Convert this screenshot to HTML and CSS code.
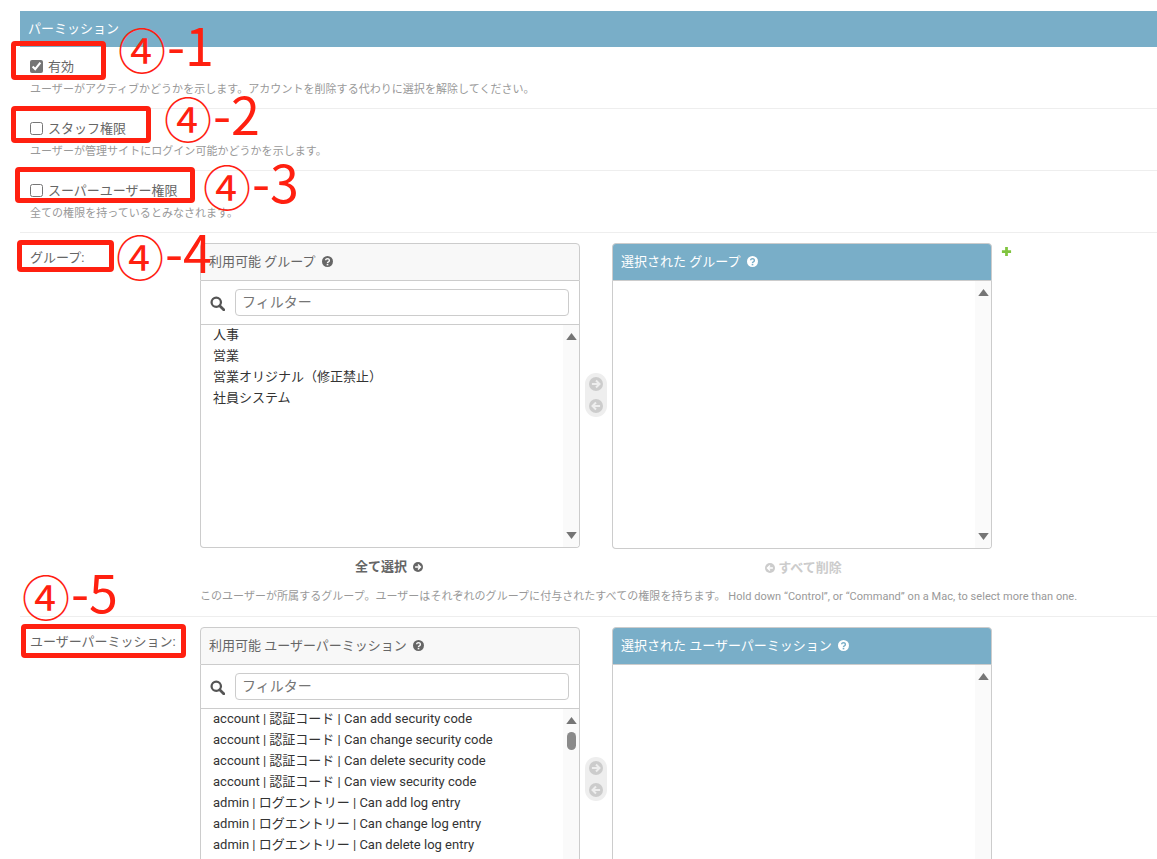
FILE: index.html
```html
<!DOCTYPE html>
<html lang="ja">
<head>
  <meta charset="UTF-8" />
  <title>パーミッション</title>
  <link rel="stylesheet" href="styles.css">
</head>
<body>
  <svg class="icon-defs" width="0" height="0">
    <symbol id="i-help" viewBox="0 0 24 24">
      <circle cx="12" cy="12" r="12" fill="currentColor"/>
      <path d="M8 9.500a4 3.600 0 1 1 6 3.200c-1.400.8-2 1.300-2 2.800" fill="none" stroke="var(--hole)" stroke-width="3.200"/>
      <rect x="10.200" y="17" width="3.600" height="3.400" fill="var(--hole)"/>
    </symbol>
    <symbol id="i-search" viewBox="0 0 24 24">
      <circle cx="10" cy="10" r="7.500" fill="none" stroke="currentColor" stroke-width="3.600"/>
      <path d="M15.500 15.500l6.500 6.500" stroke="currentColor" stroke-width="4.400" stroke-linecap="round"/>
    </symbol>
    <symbol id="i-right" viewBox="0 0 24 24">
      <circle cx="12" cy="12" r="12" fill="currentColor"/>
      <path d="M5 12h12M12 6l6 6-6 6" fill="none" stroke="var(--hole)" stroke-width="3.400"/>
    </symbol>
    <symbol id="i-left" viewBox="0 0 24 24">
      <circle cx="12" cy="12" r="12" fill="currentColor"/>
      <path d="M19 12H7M12 6l-6 6 6 6" fill="none" stroke="var(--hole)" stroke-width="3.400"/>
    </symbol>
    <symbol id="i-up" viewBox="0 0 12 8"><path d="M6 0l6 8H0z" fill="currentColor"/></symbol>
    <symbol id="i-down" viewBox="0 0 12 8"><path d="M0 0h12L6 8z" fill="currentColor"/></symbol>
  </svg>

  <div class="page">
    <h2 class="module-title">パーミッション</h2>

    <div class="form-row">
      <label class="check-label"><input type="checkbox" checked> 有効</label>
      <div class="help">ユーザーがアクティブかどうかを示します。アカウントを削除する代わりに選択を解除してください。</div>
    </div>
    <div class="form-row">
      <label class="check-label"><input type="checkbox"> スタッフ権限</label>
      <div class="help">ユーザーが管理サイトにログイン可能かどうかを示します。</div>
    </div>
    <div class="form-row">
      <label class="check-label"><input type="checkbox"> スーパーユーザー権限</label>
      <div class="help">全ての権限を持っているとみなされます。</div>
    </div>

    <div class="form-row selector-row">
      <div class="field">
        <div class="field-label">グループ:</div>
        <div class="selector">
          <div class="sel-box">
            <div class="sel-title">利用可能 グループ <svg class="q"><use href="#i-help"/></svg></div>
            <div class="sel-filter">
              <svg class="search"><use href="#i-search"/></svg>
              <input type="text" placeholder="フィルター">
            </div>
            <div class="sel-list group-avail">
              <div class="options">
                <div>人事</div>
                <div>営業</div>
                <div>営業オリジナル（修正禁止）</div>
                <div>社員システム</div>
              </div>
              <div class="scroll"><svg class="arrow"><use href="#i-up"/></svg><svg class="arrow"><use href="#i-down"/></svg></div>
            </div>
            <div class="sel-all"><b>全て選択</b> <svg class="small-arrow"><use href="#i-right"/></svg></div>
          </div>
          <div class="movers">
            <svg><use href="#i-right"/></svg>
            <svg><use href="#i-left"/></svg>
          </div>
          <div class="sel-box chosen">
            <div class="sel-title">選択された グループ <svg class="q"><use href="#i-help"/></svg></div>
            <div class="sel-list group-chosen">
              <div class="options"></div>
              <div class="scroll"><svg class="arrow"><use href="#i-up"/></svg><svg class="arrow"><use href="#i-down"/></svg></div>
            </div>
            <div class="sel-all off"><svg class="small-arrow"><use href="#i-left"/></svg> <b>すべて削除</b></div>
          </div>
          <svg class="add-link" viewBox="0 0 12 12"><path d="M4.500 1h3v3.500H11v3H7.500V11h-3V7.500H1v-3h3.500z"/></svg>
        </div>
      </div>
      <div class="help selector-help">このユーザーが所属するグループ。ユーザーはそれぞれのグループに付与されたすべての権限を持ちます。 Hold down “Control”, or “Command” on a Mac, to select more than one.</div>
    </div>

    <div class="form-row selector-row">
      <div class="field">
        <div class="field-label">ユーザーパーミッション:</div>
        <div class="selector">
          <div class="sel-box">
            <div class="sel-title">利用可能 ユーザーパーミッション <svg class="q"><use href="#i-help"/></svg></div>
            <div class="sel-filter">
              <svg class="search"><use href="#i-search"/></svg>
              <input type="text" placeholder="フィルター">
            </div>
            <div class="sel-list perm-list">
              <div class="options">
                <div>account | 認証コード | Can add security code</div>
                <div>account | 認証コード | Can change security code</div>
                <div>account | 認証コード | Can delete security code</div>
                <div>account | 認証コード | Can view security code</div>
                <div>admin | ログエントリー | Can add log entry</div>
                <div>admin | ログエントリー | Can change log entry</div>
                <div>admin | ログエントリー | Can delete log entry</div>
              </div>
              <div class="scroll"><svg class="arrow"><use href="#i-up"/></svg><span class="thumb"></span></div>
            </div>
          </div>
          <div class="movers">
            <svg><use href="#i-right"/></svg>
            <svg><use href="#i-left"/></svg>
          </div>
          <div class="sel-box chosen">
            <div class="sel-title">選択された ユーザーパーミッション <svg class="q"><use href="#i-help"/></svg></div>
            <div class="sel-list chosen-perm">
              <div class="options"></div>
              <div class="scroll"><svg class="arrow"><use href="#i-up"/></svg></div>
            </div>
          </div>
        </div>
      </div>
    </div>
  </div>

  <!-- 赤い注釈 -->
  <div class="mark box-1"></div>
  <div class="mark box-2"></div>
  <div class="mark box-3"></div>
  <div class="mark box-4"></div>
  <div class="mark box-5"></div>
  <div class="note note-1">④<span class="num">-1</span></div>
  <div class="note note-2">④<span class="num">-2</span></div>
  <div class="note note-3">④<span class="num">-3</span></div>
  <div class="note note-4">④<span class="num">-4</span></div>
  <div class="note note-5">④<span class="num">-5</span></div>
</body>
</html>
```

FILE: styles.css
```css
html, body {
  margin: 0;
  height: 859px;
  overflow: hidden;
}

body {
  position: relative;
  background: #fff;
  color: #333;
  font-family: Roboto, "Noto Sans CJK JP", sans-serif;
  font-size: 13px;
}

.icon-defs {
  position: absolute;
}

.page {
  height: 859px;
  overflow: hidden;
  padding: 11px 0 0 20px;
  box-sizing: border-box;
}

.module-title {
  margin: 0;
  height: 36px;
  padding-left: 8px;
  background: #79aec8;
  color: #fff;
  font-size: 13px;
  font-weight: 400;
  line-height: 36px;
}

.form-row {
  padding: 9px 0 0 10px;
  height: 52px;
  border-bottom: 1px solid #eee;
}

.check-label {
  display: flex;
  align-items: flex-start;
  gap: 5px;
  height: 20px;
  color: #666;
  line-height: 22px;
}

.check-label input {
  width: 13px;
  height: 13px;
  margin: 4px 0 0;
  accent-color: #757575;
}

.help {
  margin-top: 5px;
  color: #999;
  font-size: 11px;
  letter-spacing: 0.04px;
  line-height: 18px;
}

.selector-row {
  height: auto;
  padding-top: 10px;
  padding-bottom: 10px;
}

.field {
  display: flex;
}

.field-label {
  width: 170px;
  flex: none;
  padding-top: 6px;
  color: #666;
  line-height: 18px;
  white-space: nowrap;
}

.selector {
  display: flex;
  align-items: flex-start;
}

.sel-box {
  width: 380px;
  flex: none;
}

.sel-title {
  height: 36px;
  padding-left: 8px;
  background: #f8f8f8;
  border: 1px solid #ccc;
  border-radius: 4px 4px 0 0;
  color: #666;
  font-size: 13px;
  line-height: 35px;
  white-space: nowrap;
}

.q {
  --hole: #f8f8f8;
  width: 11px;
  height: 11px;
  margin-left: 3px;
  vertical-align: -1px;
  color: #666;
}

.sel-filter {
  display: flex;
  align-items: center;
  height: 43px;
  padding: 0 10px 0 9px;
  border: 1px solid #ccc;
  border-top: 0;
  color: #555;
}

.search {
  width: 15px;
  height: 15px;
  margin: 2px 10px 0 0;
}

.sel-filter input {
  flex: 1;
  min-width: 0;
  height: 27px;
  box-sizing: border-box;
  padding: 0 6px 2px;
  border: 1px solid #ccc;
  border-radius: 4px;
  font: inherit;
  font-size: 14px;
}

.sel-filter input::placeholder {
  color: #757575;
}

.sel-list {
  display: flex;
  border: 1px solid #ccc;
  border-top: 0;
  background: #fff;
  overflow: hidden;
}

.perm-list {
  height: 200px;
}

.chosen-perm {
  height: 240px;
}

.group-avail {
  height: 222px;
  border-radius: 0 0 4px 4px;
}

.group-chosen {
  height: 267px;
  border-radius: 0 0 4px 4px;
}

.options {
  flex: 1;
  margin-top: -1px;
  padding: 0 12px;
  color: #333;
  line-height: 21px;
  white-space: nowrap;
}

.scroll {
  display: flex;
  flex-direction: column;
  justify-content: space-between;
  align-items: center;
  align-self: stretch;
  width: 16px;
  background: #fafafa;
  color: #757575;
}

.arrow {
  width: 11px;
  height: 7px;
  margin: 8px 0;
}

.sel-list .thumb {
  width: 9px;
  height: 18px;
  border-radius: 5px;
  background: #8a8a8a;
  margin-top: 0;
  margin-bottom: auto;
}

.sel-all {
  margin-top: 11px;
  padding-left: 155px;
  color: #666;
  font-size: 13px;
  line-height: 16px;
}

.sel-all.off {
  padding-left: 151px;
  color: #ccc;
}

.small-arrow {
  --hole: #fff;
  width: 10px;
  height: 10px;
  margin-left: 3px;
  vertical-align: -1px;
}

.sel-all.off .small-arrow {
  margin-left: 2px;
}

.movers {
  display: flex;
  flex-direction: column;
  align-items: center;
  gap: 8px;
  box-sizing: border-box;
  width: 22px;
  height: 44px;
  margin: 130px 5px 0;
  padding: 4px 0;
  border-radius: 11px;
  background: #eee;
  color: #ccc;
  --hole: #eee;
}

.movers svg {
  width: 14px;
  height: 14px;
}

.chosen .sel-title {
  background: #79aec8;
  color: #fff;
}

.chosen .q {
  --hole: #79aec8;
  color: #fff;
}

.add-link {
  width: 11px;
  height: 11px;
  margin: 3px 0 0 9px;
  fill: #80c43f;
}

.help.selector-help {
  margin: 12px 0 0 170px;
  white-space: nowrap;
}

/* annotations drawn over the screenshot */
.mark {
  position: absolute;
  box-sizing: border-box;
  border: 5px solid #ff2010;
  border-radius: 4px;
}

.box-1 { left: 11px; top: 41px; width: 95px; height: 39px; }
.box-2 { left: 11px; top: 106px; width: 140px; height: 37px; }
.box-3 { left: 15px; top: 167px; width: 180px; height: 36px; }
.box-4 { left: 17px; top: 240px; width: 97px; height: 32px; }
.box-5 { left: 21px; top: 624px; width: 165px; height: 34px; }

.note {
  position: absolute;
  color: #ff2010;
  font-family: "Noto Sans CJK JP", sans-serif;
  font-size: 48px;
  line-height: 50px;
  white-space: nowrap;
}

.num {
  margin-left: 1px;
  font-size: 52px;
  vertical-align: 3px;
}

.note-1 { left: 118px; top: 19px; }
.note-2 { left: 164px; top: 88px; }
.note-3 { left: 203px; top: 156px; }
.note-4 { left: 116px; top: 226px; }
.note-5 { left: 22px; top: 566px; }
```
